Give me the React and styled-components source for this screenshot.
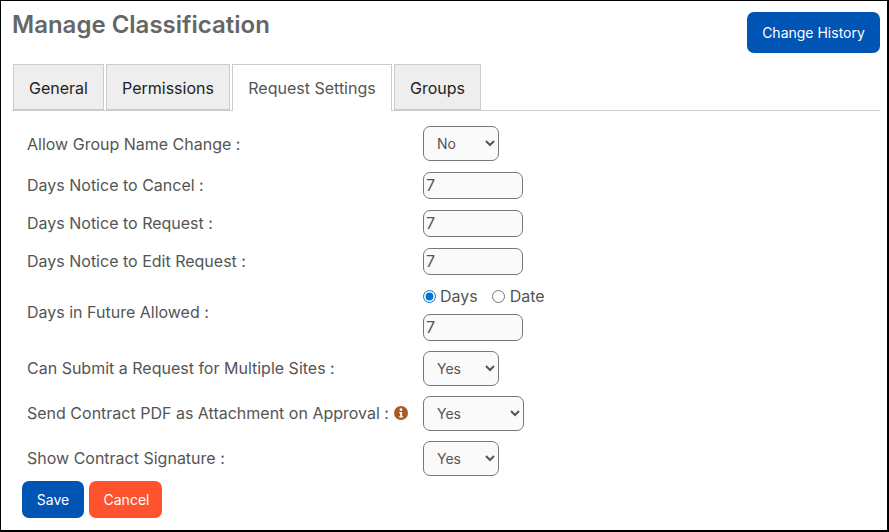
import styled, { createGlobalStyle } from "styled-components";

const GlobalStyle = createGlobalStyle`
  html, body {
    margin: 0;
    padding: 0;
    background: #fff;
  }

  body {
    font-family: Inter, "Liberation Sans", sans-serif;
  }
`;

const Page = styled.div`
  box-sizing: border-box;
  width: 889px;
  height: 532px;
  border: 1px solid #000;
  border-right-width: 2px;
  border-bottom-width: 2px;
  padding: 0 7px 0 11px;
  background: #fff;
  overflow: hidden;
`;

const Header = styled.header`
  display: flex;
  justify-content: space-between;
  align-items: flex-start;
  height: 63px;
`;

const Title = styled.h1`
  margin: 9px 0 0;
  font-size: 24px;
  line-height: 30px;
  font-weight: 600;
  color: #666;
`;

const Button = styled.button`
  border: 0;
  border-radius: 7px;
  background: ${(p) => p.$bg || "#0054b4"};
  color: #fff;
  font-family: inherit;
  font-size: 14px;
  font-weight: 400;
  height: ${(p) => p.$h}px;
  width: ${(p) => p.$w}px;
  padding: 0;
`;

const HistoryButton = styled(Button)`
  margin-top: 11px;
`;

const CancelButton = styled(Button)`
  padding-left: 2px;
`;

const Tabs = styled.nav`
  display: flex;
  gap: 2px;
  height: 46px;
  border-bottom: 1px solid #ccc;
  padding-left: 1px;
`;

const Tab = styled.div`
  box-sizing: border-box;
  width: ${(p) => p.$w}px;
  height: ${(p) => (p.$active ? 47 : 46)}px;
  display: flex;
  align-items: center;
  justify-content: center;
  padding-top: ${(p) => (p.$active ? 0 : 1)}px;
  border: 1px solid #ccc;
  border-bottom: ${(p) => (p.$active ? "0" : "1px solid #ccc")};
  background: ${(p) => (p.$active ? "#fff" : "#eee")};
  color: ${(p) => (p.$active ? "#555" : "#222")};
  font-size: 16px;
`;

const Form = styled.form`
  display: flex;
  flex-direction: column;
  padding: 15px 0 0 15px;
`;

const Row = styled.div`
  display: grid;
  grid-template-columns: 396px 1fr;
  align-items: center;
  margin-bottom: ${(p) => p.$gap}px;
`;

const Label = styled.label`
  display: flex;
  align-items: center;
  gap: 5px;
  padding-bottom: ${(p) => p.$lift ?? 2}px;
  font-size: 16px;
  color: #555;
`;

const Select = styled.select`
  box-sizing: border-box;
  width: ${(p) => p.$w || 76}px;
  height: 35px;
  padding: 0 0 0 9px;
  border: 1px solid #777;
  border-radius: 7px;
  background: #fafafa;
  color: #555;
  font-family: inherit;
  font-size: 14px;
`;

const TextInput = styled.input`
  box-sizing: border-box;
  display: block;
  width: 100px;
  height: 27px;
  padding: 0 2px 1px;
  border: 1px solid #777;
  border-radius: 7px;
  background: #fafafa;
  color: #555;
  font-family: inherit;
  font-size: 16px;
`;

const Radios = styled.div`
  display: flex;
  align-items: center;
  height: 18px;
  margin: 1px 0 9px;
`;

const RadioLabel = styled.label`
  display: flex;
  align-items: center;
  margin-right: 14px;
  font-size: 16px;
  color: #555;
`;

const Radio = styled.input`
  width: 13px;
  height: 13px;
  margin: 0 4px 0 0;
  accent-color: #0075d8;
`;

const DateRadio = styled(Radio)`
  margin-right: 5px;
`;

const Actions = styled.div`
  display: flex;
  gap: 5px;
  margin-left: -5px;
`;

const InfoIcon = () => (
  <svg width="14" height="14" viewBox="0 0 14 14" aria-hidden="true">
    <circle cx="7" cy="7" r="7" fill="#a85a25" />
    <circle cx="7" cy="3.6" r="1.4" fill="#fff" />
    <path d="M5.2 6h2.9v4.2h1v1.3H5.2v-1.3h1V7.3h-1z" fill="#fff" />
  </svg>
);

const App = () => {
  return (
    <Page>
      <GlobalStyle />
      <Header>
        <Title>Manage Classification</Title>
        <HistoryButton type="button" $w={133} $h={41}>
          Change History
        </HistoryButton>
      </Header>

      <Tabs>
        <Tab $w={91}>General</Tab>
        <Tab $w={124}>Permissions</Tab>
        <Tab $w={160} $active>
          Request Settings
        </Tab>
        <Tab $w={87}>Groups</Tab>
      </Tabs>

      <Form>
        <Row $gap={11}>
          <Label $lift={0}>Allow Group Name Change :</Label>
          <Select defaultValue="No">
            <option>No</option>
            <option>Yes</option>
          </Select>
        </Row>
        <Row $gap={11}>
          <Label>Days Notice to Cancel :</Label>
          <TextInput defaultValue="7" />
        </Row>
        <Row $gap={11}>
          <Label>Days Notice to Request :</Label>
          <TextInput defaultValue="7" />
        </Row>
        <Row $gap={11}>
          <Label>Days Notice to Edit Request :</Label>
          <TextInput defaultValue="7" />
        </Row>
        <Row $gap={10}>
          <Label $lift={4}>Days in Future Allowed :</Label>
          <div>
            <Radios>
              <RadioLabel>
                <Radio type="radio" name="future" defaultChecked />
                Days
              </RadioLabel>
              <RadioLabel>
                <DateRadio type="radio" name="future" />
                Date
              </RadioLabel>
            </Radios>
            <TextInput defaultValue="7" />
          </div>
        </Row>
        <Row $gap={10}>
          <Label>Can Submit a Request for Multiple Sites :</Label>
          <Select defaultValue="Yes">
            <option>Yes</option>
            <option>No</option>
          </Select>
        </Row>
        <Row $gap={10}>
          <Label>
            Send Contract PDF as Attachment on Approval :
            <InfoIcon />
          </Label>
          <Select $w={101} defaultValue="Yes">
            <option>Yes</option>
            <option>No</option>
          </Select>
        </Row>
        <Row $gap={5}>
          <Label>Show Contract Signature :</Label>
          <Select defaultValue="Yes">
            <option>Yes</option>
            <option>No</option>
          </Select>
        </Row>
        <Actions>
          <Button type="button" $w={62} $h={37}>
            Save
          </Button>
          <CancelButton type="button" $w={73} $h={37} $bg="#ff532d">
            Cancel
          </CancelButton>
        </Actions>
      </Form>
    </Page>
  );
};

export default App;
